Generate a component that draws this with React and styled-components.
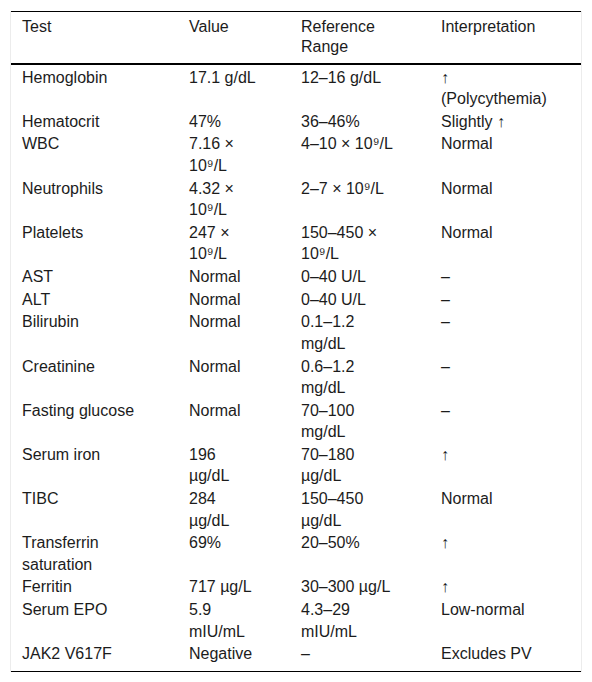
import React from "react";
import styled, { createGlobalStyle } from "styled-components";

const GlobalStyle = createGlobalStyle`
  body {
    margin: 0;
    background: #fff;
    font-family: "Liberation Sans", Arial, sans-serif;
  }
`;

const Frame = styled.div`
  margin: 11px 0 0 10px;
  width: 570px;
  border-left: 1px solid #ececec;
  border-right: 1px solid #ececec;
`;

const Table = styled.table`
  width: 570px;
  table-layout: fixed;
  border-collapse: collapse;
  font-size: 16px;
  color: #1c1c1c;
  border-top: 1px solid #000;
  border-bottom: 1px solid #000;
`;

const Col = styled.col`
  width: ${(p) => p.$w}px;
`;

const Th = styled.th`
  text-align: left;
  font-weight: normal;
  vertical-align: top;
  line-height: 20px;
  padding: 5px 32px 6px 11px;
  border-bottom: 2px solid #000;
`;

const Row = styled.tr`
  &:first-child td {
    padding-top: 1.5px;
  }
  &:last-child td {
    padding-bottom: 6px;
  }
`;

const Td = styled.td`
  vertical-align: top;
  line-height: 21.5px;
  padding: 0.6px 32px 0.6px 11px;
`;

const widths = [167, 112, 140, 151];
const heads = ["Test", "Value", "Reference Range", "Interpretation"];

const rows = [
  ["Hemoglobin", "17.1 g/dL", "12–16 g/dL", "↑ (Polycythemia)"],
  ["Hematocrit", "47%", "36–46%", "Slightly ↑"],
  ["WBC", "7.16 × 10⁹/L", "4–10 × 10⁹/L", "Normal"],
  ["Neutrophils", "4.32 × 10⁹/L", "2–7 × 10⁹/L", "Normal"],
  ["Platelets", "247 × 10⁹/L", "150–450 × 10⁹/L", "Normal"],
  ["AST", "Normal", "0–40 U/L", "–"],
  ["ALT", "Normal", "0–40 U/L", "–"],
  ["Bilirubin", "Normal", "0.1–1.2 mg/dL", "–"],
  ["Creatinine", "Normal", "0.6–1.2 mg/dL", "–"],
  ["Fasting glucose", "Normal", "70–100 mg/dL", "–"],
  ["Serum iron", "196 µg/dL", "70–180 µg/dL", "↑"],
  ["TIBC", "284 µg/dL", "150–450 µg/dL", "Normal"],
  ["Transferrin saturation", "69%", "20–50%", "↑"],
  ["Ferritin", "717 µg/L", "30–300 µg/L", "↑"],
  ["Serum EPO", "5.9 mIU/mL", "4.3–29 mIU/mL", "Low-normal"],
  ["JAK2 V617F", "Negative", "–", "Excludes PV"],
];

export default function App() {
  return (
    <>
      <GlobalStyle />
      <Frame>
        <Table>
          <colgroup>
            {widths.map((w, i) => (
              <Col key={i} $w={w} />
            ))}
          </colgroup>
          <thead>
            <tr>
              {heads.map((h) => (
                <Th key={h}>{h}</Th>
              ))}
            </tr>
          </thead>
          <tbody>
            {rows.map((r) => (
              <Row key={r[0]}>
                {r.map((c, i) => (
                  <Td key={i}>{c}</Td>
                ))}
              </Row>
            ))}
          </tbody>
        </Table>
      </Frame>
    </>
  );
}
